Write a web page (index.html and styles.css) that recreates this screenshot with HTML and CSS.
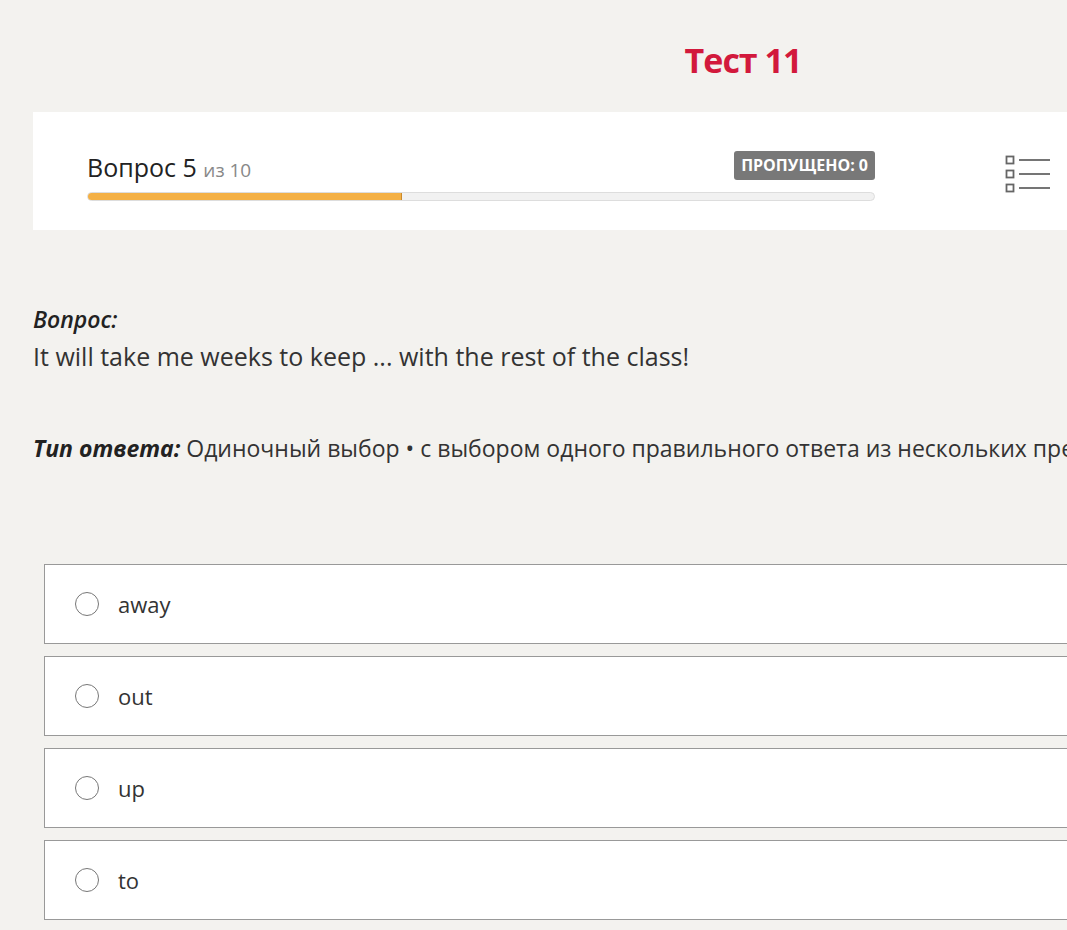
FILE: index.html
```html
<!DOCTYPE html>
<html lang="ru">
<head>
<meta charset="utf-8">
<link rel="stylesheet" href="styles.css">
</head>
<body>
<div class="page">
  <h1 class="title">Тест 11</h1>
  <div class="head-card">
    <div class="head-main">
      <div class="head-row">
        <div class="qnum">Вопрос 5 <span class="of">из 10</span></div>
        <div class="badge">ПРОПУЩЕНО: 0</div>
      </div>
      <div class="progress"><div class="fill" style="width:40%"></div></div>
    </div>
    <div class="list-icon">
      <svg width="46" height="42" viewBox="0 0 46 42">
        <g fill="none" stroke="#666" stroke-width="1.8">
          <rect x="1.5" y="2.5" width="7" height="7"/>
          <rect x="1.5" y="16.5" width="7" height="7"/>
          <rect x="1.5" y="30.5" width="7" height="7"/>
          <line x1="14" y1="6" x2="45" y2="6"/>
          <line x1="14" y1="20" x2="45" y2="20"/>
          <line x1="14" y1="34" x2="45" y2="34"/>
        </g>
      </svg>
    </div>
  </div>

  <div class="question">
    <div class="q-label">Вопрос:</div>
    <div class="q-text">It will take me weeks to keep ... with the rest of the class!</div>
  </div>

  <div class="answer-type"><span class="at-label">Тип ответа:</span> Одиночный выбор • с выбором одного правильного ответа из нескольких предложенных вариантов</div>

  <div class="options">
    <label class="option"><span class="radio"></span><span class="opt-text">away</span></label>
    <label class="option"><span class="radio"></span><span class="opt-text">out</span></label>
    <label class="option"><span class="radio"></span><span class="opt-text">up</span></label>
    <label class="option"><span class="radio"></span><span class="opt-text">to</span></label>
  </div>
</div>
</body>
</html>
```

FILE: styles.css
```css
html, body {
  margin: 0;
  padding: 0;
  background: #f3f2ef;
  overflow: hidden;
}
body {
  font-family: "Open Sans", "Noto Sans", sans-serif;
  color: #333;
}
.page {
  width: 1420px;
  padding-left: 33px;
}
.title {
  margin: 0;
  padding-top: 38px;
  height: 112px;
  box-sizing: border-box;
  text-align: center;
  font-size: 34px;
  font-weight: 700;
  color: #d2193c;
  line-height: 44px;
  letter-spacing: -1px;
}
.head-card {
  background: #fff;
  height: 118px;
  display: flex;
  align-items: center;
  padding-left: 54px;
  box-sizing: border-box;
}
.head-main {
  width: 788px;
  padding-top: 10px;
}
.head-row {
  display: flex;
  justify-content: space-between;
  align-items: flex-end;
}
.qnum {
  font-size: 25px;
  color: #222;
  line-height: 32px;
}
.of {
  font-size: 19px;
  color: #888;
}
.badge {
  background: #787878;
  color: #fff;
  font-weight: 700;
  font-size: 16px;
  padding: 0 7px;
  height: 29px;
  line-height: 29px;
  border-radius: 3px;
  margin-bottom: 6px;
}
.progress {
  margin-top: 6px;
  height: 9px;
  background: #f1f1f1;
  border: 1px solid #ddd;
  border-radius: 5px;
  overflow: hidden;
  box-sizing: border-box;
}
.fill {
  height: 100%;
  background: #f4b045;
  border-right: 1px solid #c98a2c;
  box-sizing: border-box;
}
.list-icon {
  margin-left: 130px;
  padding-top: 12px;
}
.question {
  margin-top: 72px;
}
.q-label {
  font-style: italic;
  font-weight: 600;
  font-size: 23px;
  color: #222;
  line-height: 34px;
}
.q-text {
  font-size: 25px;
  line-height: 40px;
  color: #333;
}
.answer-type {
  margin-top: 52px;
  font-size: 23px;
  line-height: 40px;
  color: #333;
  white-space: nowrap;
}
.at-label {
  font-style: italic;
  font-weight: 700;
  color: #222;
}
.options {
  margin-top: 96px;
  margin-left: 11px;
  display: flex;
  flex-direction: column;
  gap: 12px;
}
.option {
  display: flex;
  align-items: center;
  height: 80px;
  box-sizing: border-box;
  background: #fff;
  border: 1px solid #999;
  padding-left: 30px;
}
.radio {
  width: 24px;
  height: 24px;
  border: 1.5px solid #777;
  border-radius: 50%;
  box-sizing: border-box;
}
.opt-text {
  margin-left: 19px;
  font-size: 22px;
  color: #333;
}
```
